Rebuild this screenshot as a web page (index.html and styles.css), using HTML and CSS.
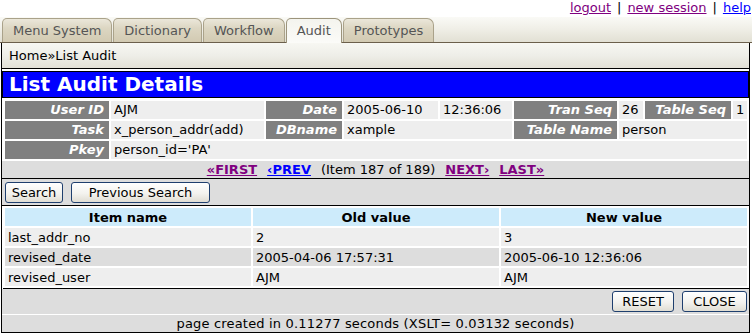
FILE: index.html
```html
<!DOCTYPE html>
<html>
<head>
<meta charset="utf-8">
<title>List Audit Details</title>
<link rel="stylesheet" href="styles.css">
</head>
<body>
<div class="toplinks">
  <a class="visited" href="#">logout</a><span class="sep">|</span><a class="visited" href="#">new session</a><span class="sep">|</span><a href="#">help</a>
</div>
<div class="tabbar">
  <div class="tab">Menu System</div>
  <div class="tab">Dictionary</div>
  <div class="tab">Workflow</div>
  <div class="tab active">Audit</div>
  <div class="tab">Prototypes</div>
</div>
<div class="main">
  <div class="crumb">Home»List Audit</div>
  <div class="title">List Audit Details</div>
  <table class="details">
    <colgroup>
      <col class="c1"><col class="c2"><col class="c3"><col class="c4"><col class="c5"><col class="c6"><col class="c7"><col class="c8"><col class="c9">
    </colgroup>
    <tr>
      <td class="lbl">User ID</td><td class="val">AJM</td>
      <td class="lbl">Date</td><td class="val">2005-06-10</td><td class="val">12:36:06</td>
      <td class="lbl">Tran Seq</td><td class="val">26</td>
      <td class="lbl">Table Seq</td><td class="val">1</td>
    </tr>
    <tr>
      <td class="lbl">Task</td><td class="val">x_person_addr(add)</td>
      <td class="lbl">DBname</td><td class="val" colspan="2">xample</td>
      <td class="lbl">Table Name</td><td class="val" colspan="3">person</td>
    </tr>
    <tr>
      <td class="lbl">Pkey</td><td class="val" colspan="8">person_id='PA'</td>
    </tr>
  </table>
  <div class="nav">
    <a class="visited" href="#">«FIRST</a>
    <a href="#">‹PREV</a>
    <span class="count">(Item 187 of 189)</span>
    <a class="visited" href="#">NEXT›</a>
    <a class="visited" href="#">LAST»</a>
  </div>
  <div class="btnrow">
    <button class="btn btn-search">Search</button>
    <button class="btn btn-prev">Previous Search</button>
  </div>
  <table class="items">
    <tr><th>Item name</th><th>Old value</th><th>New value</th></tr>
    <tr class="odd"><td>last_addr_no</td><td>2</td><td>3</td></tr>
    <tr class="even"><td>revised_date</td><td>2005-04-06 17:57:31</td><td>2005-06-10 12:36:06</td></tr>
    <tr class="odd"><td>revised_user</td><td>AJM</td><td>AJM</td></tr>
  </table>
  <div class="actions">
    <button class="btn btn-reset">RESET</button>
    <button class="btn btn-close">CLOSE</button>
  </div>
  <div class="footer">page created in 0.11277 seconds (XSLT= 0.03132 seconds)</div>
</div>
</body>
</html>
```
FILE: styles.css
```css
html, body {
  margin: 0;
  padding: 0;
  background: #ffffff;
}
body {
  font-family: "DejaVu Sans", Verdana, sans-serif;
  font-size: 13px;
  color: #000;
  width: 752px;
  overflow: hidden;
}
a {
  color: #0000ff;
  text-decoration: underline;
}
a.visited {
  color: #800080;
}
.toplinks {
  height: 17px;
  line-height: 15px;
  display: flex;
  justify-content: flex-end;
  gap: 6px;
  padding-right: 1px;
}
.tabbar {
  height: 25px;
  display: flex;
  align-items: flex-end;
  padding-left: 2px;
  gap: 1px;
  border-bottom: 1px solid #6b5f4b;
  background: linear-gradient(#fafaf6, #efeee6 50%, #e2e0d4);
}
.tab {
  height: 24px;
  line-height: 24px;
  padding: 0 10px;
  color: #555;
  border: 1px solid #aaa28a;
  border-bottom: none;
  border-radius: 5px 7px 0 0;
  background: linear-gradient(#ebe7da, #dcd6c2 40%, #d2cab2);
  box-sizing: border-box;
}
.tab.active {
  height: 25px;
  margin-bottom: -1px;
  background: linear-gradient(#f4f4ee, #fbfbf8);
  border-color: #9c947c;
}
.main {
  margin-left: 1px;
  width: 747px;
  border: 1px solid #000;
  border-top: none;
}
.crumb {
  height: 25px;
  line-height: 25px;
  padding-left: 7px;
  border-bottom: 1px solid #000;
  background: linear-gradient(#f7f7f2, #eeeee8 50%, #e2e0d6);
}
.title {
  margin-top: 2px;
  height: 25px;
  line-height: 25px;
  border: 1px solid #000;
  background: #0000ff;
  color: #fff;
  font-weight: bold;
  font-size: 20px;
  padding-left: 6px;
}
.details {
  margin: 1px 0 0 1px;
  width: 746px;
  table-layout: fixed;
  border-spacing: 2px;
  border-collapse: separate;
}
.c1 { width: 104px; }
.c2 { width: 153px; }
.c3 { width: 76px; }
.c4 { width: 94px; }
.c5 { width: 72px; }
.c6 { width: 103px; }
.c7 { width: 24px; }
.c8 { width: 86px; }
.c9 { width: 14px; }
.details td {
  height: 18px;
  padding: 0;
  line-height: 18px;
  white-space: nowrap;
  overflow: hidden;
}
.details .lbl {
  background: #808080;
  color: #fff;
  font-weight: bold;
  font-style: italic;
  text-align: right;
  padding-right: 5px;
}
.details .val {
  background: #eeeeee;
  padding-left: 3px;
}
.nav {
  height: 17px;
  line-height: 17px;
  background: #dddddd;
  border-bottom: 1px solid #000;
  display: flex;
  justify-content: center;
  gap: 10px;
}
.nav a {
  font-weight: bold;
}
.btnrow {
  height: 26px;
  background: #dddddd;
  border-bottom: 1px solid #000;
  display: flex;
  align-items: center;
  padding-left: 3px;
  gap: 8px;
}
.btn {
  font-family: "DejaVu Sans", Verdana, sans-serif;
  font-size: 13px;
  color: #000;
  height: 21px;
  padding: 0;
  border: 1px solid #1f3f6e;
  border-radius: 3px;
  background: linear-gradient(#ffffff, #f3f2ee 55%, #e0ddd3);
  box-sizing: border-box;
}
.btn-search { width: 58px; }
.btn-prev { width: 139px; }
.btn-reset { width: 62px; }
.btn-close { width: 65px; }
.items {
  margin-left: 1px;
  width: 746px;
  table-layout: fixed;
  border-spacing: 2px;
  border-collapse: separate;
  border-bottom: 1px solid #000;
}
.items th {
  height: 18px;
  padding: 0;
  background: #cdebfb;
  font-weight: bold;
  text-align: center;
}
.items td {
  height: 18px;
  padding: 0 3px;
  white-space: nowrap;
}
.items .odd td { background: #eeeeee; }
.items .even td { background: #dddddd; }
.actions {
  height: 25px;
  background: #dddddd;
  border-bottom: 1px solid #fff;
  display: flex;
  justify-content: flex-end;
  align-items: center;
  padding-right: 2px;
  gap: 8px;
}
.footer {
  height: 17px;
  line-height: 17px;
  background: #dddddd;
  text-align: center;
  letter-spacing: 0.18px;
}
```
